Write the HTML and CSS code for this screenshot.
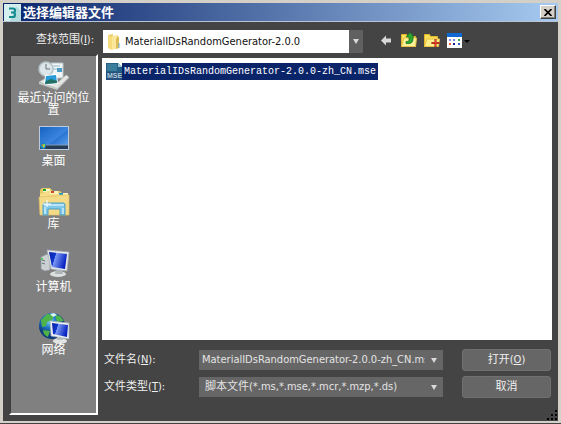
FILE: index.html
```html
<!DOCTYPE html>
<html lang="zh-CN">
<head>
<meta charset="utf-8">
<title>选择编辑器文件</title>
<link rel="stylesheet" href="styles.css">
</head>
<body>
<main class="window">
  <header class="titlebar">
    <svg class="app-icon" width="17" height="17" viewBox="0 0 17 17" aria-hidden="true">
      <rect width="17" height="17" fill="#d5eeee"/>
      <path d="M12 2l5 5v10H6z" fill="#b3dcdf"/>
      <path d="M5 4.500h4q2 0 2 2t-2 2q2 0 2 2.200t-2 2.300H5M7 8.500h2" fill="none" stroke="#168c91" stroke-width="2.200"/>
    </svg>
    <h1 class="title">选择编辑器文件</h1>
    <button class="close" type="button" aria-label="关闭">
      <svg width="8" height="7" viewBox="0 0 8 7"><path d="M.5 0l7 7M7.500 0l-7 7" stroke="#000" stroke-width="1.700"/></svg>
    </button>
  </header>
  <form class="content">
    <label class="look-label" for="folder">查找范围(<u>I</u>):</label>
    <div class="toolbar">
      <div class="folder-box">
        <svg class="folder-icon" width="16" height="18" viewBox="0 0 16 18" aria-hidden="true">
          <path d="M2 2l5-1v15l-5-1z" fill="#e9cf6a"/>
          <path d="M6 3l6-1v13l-6 2z" fill="#fae79a"/>
          <path d="M2 2l4 2v13l-4-2z" fill="#f6dc7c"/>
          <path d="M12 3l1 1v11l-3 1V6z" fill="#dfbd55"/>
          <path d="M13 10v5" stroke="#6caad6"/>
        </svg>
        <select class="folder" id="folder"><option>MaterialIDsRandomGenerator-2.0.0</option></select>
        <span class="folder-arrow"></span>
      </div>
      <div class="tools">
        <button class="tool" type="button" aria-label="后退">
          <svg width="18" height="18" viewBox="0 0 18 18"><path d="M4 9.500l5-5v3h5v4H9v3z" fill="#d8d8d8"/></svg>
        </button>
        <button class="tool" type="button" aria-label="向上一级">
          <svg width="18" height="18" viewBox="0 0 18 18">
            <path d="M1.500 15.500v-12h5l1 2h8v10z" fill="#f9df58" stroke="#e4b72c"/>
            <path d="M1.500 15.500L4 7h12.500l-1 8.500z" fill="#fff29a" stroke="#e8c344"/>
            <path d="M6 12.500q7 1 7-4V6h1L10 1.500 6 6h3v3q0 2-3 1.500z" fill="#2fa52e" stroke="#17731f" stroke-width=".7"/>
          </svg>
        </button>
        <button class="tool" type="button" aria-label="新建文件夹">
          <svg width="18" height="18" viewBox="0 0 18 18">
            <path d="M1.500 15.500v-12h5l1 2h7v10z" fill="#f9df58" stroke="#e4b72c"/>
            <path d="M1.500 15.500L4 8h12.500l-1 7.500z" fill="#fff08b" stroke="#e8c344"/>
            <path d="M12.500 8v8M8.500 12h8" stroke="#8f2a15" stroke-width="2"/>
            <path d="M12.500 8v8M8.500 12h8" stroke="#f03a28"/>
          </svg>
        </button>
        <button class="tool view" type="button" aria-label="查看">
          <svg width="24" height="18" viewBox="0 0 24 18">
            <path d="M1 2h15v15H1z" fill="#fff"/><path d="M1 2h15v4H1z" fill="#1268d2"/>
            <path d="M3 8h2v2H3z" fill="#8c8fd6"/><path d="M7 8h2v2H7z" fill="#6d8be0"/><path d="M12 8h2v2h-2z" fill="#39a641"/>
            <path d="M3 12h2v2H3z" fill="#ee6333"/><path d="M7 12h2v2H7z" fill="#18208f"/><path d="M12 12h2v2h-2z" fill="#3459d0"/>
            <path d="M18 9h6l-3 3z" fill="#000"/>
          </svg>
        </button>
      </div>
    </div>

    <nav class="places">
      <button class="place" type="button">
        <svg width="32" height="32" viewBox="0 0 32 32">
          <path d="M13 3h12v15H13z" fill="#f2f5f5" stroke="#b9c5c7"/><path d="M15 6h7M15 9h7" stroke="#8eb9cc"/>
          <path d="M19 8h5v4h-5z" fill="#4c9cc8"/>
          <circle cx="8" cy="9" r="7" fill="#dce6e9" stroke="#b4c3c8" stroke-width="1.500"/>
          <path d="M8 4v5h4" fill="none" stroke="#61717a"/>
          <path d="M1 22l5-3 12 5 10-9 3 2-12 12z" fill="#e3e6e3" stroke="#adb2ae" stroke-width=".6"/>
          <path d="M7 15l12-1 1 10-14 1z" fill="#fff"/>
          <path d="M8 16l10-1 1 8-12 1z" fill="#269bd7"/><path d="M8 21l5-2 6 2v2l-12 1z" fill="#236f61"/>
          <path d="M1 22v2l18 6 12-12v-1L19 28z" fill="#c4c8c3"/>
        </svg>
        <span class="place-name">最近访问的位置</span>
      </button>
      <button class="place" type="button">
        <svg width="32" height="32" viewBox="0 0 32 32">
          <defs><linearGradient id="desk" x2="1" y2="1"><stop stop-color="#1564c0"/><stop offset=".55" stop-color="#3d85df"/><stop offset=".57" stop-color="#2975d4"/><stop offset="1" stop-color="#69a9ed"/></linearGradient></defs>
          <path d="M1 3h30v24H1z" fill="#b9cbdc"/><path d="M2 4h28v22H2z" fill="url(#desk)"/>
          <path d="M2 22h28v4H2z" fill="#243b55"/><path d="M2 22h28" stroke="#7e9bb8"/>
          <circle cx="5" cy="23" r="3" fill="#1683bd"/><path d="M5 21v2H3z" fill="#f7822d"/><path d="M5 23h2l-2 2z" fill="#f4df37"/><path d="M5 21h2v2H5z" fill="#7fd148"/>
        </svg>
        <span class="place-name">桌面</span>
      </button>
      <button class="place" type="button">
        <svg width="32" height="32" viewBox="0 0 32 32">
          <path d="M2 29V4l2-2h8l3 3h7l2 2h6v22z" fill="#e8c765"/>
          <path d="M5 3h7v3H5z" fill="#fff6c7"/><path d="M5 3h3v2H5z" fill="#18a631"/>
          <path d="M2 8l8-3h8l3 3v20H2z" fill="#f5dd88"/><path d="M12 5h8v3h-8z" fill="#fff2bb"/><path d="M13 5h3v2h-3z" fill="#d14822"/>
          <path d="M20 7h10v3H20z" fill="#fff2bb"/><path d="M21 7h4v2h-4z" fill="#1695d2"/>
          <path d="M1 11l17-1 2-1h11v20H2z" fill="#f3db88" stroke="#dfbf61" stroke-width=".7"/>
          <path d="M5 29V19q0-2 2-2h18q2 0 2 2v10h-5v-6H10v6z" fill="#80c8e8" stroke="#4d9fc5"/>
          <path d="M6 19h20M7 21v7M25 22v6" stroke="#caedf9" stroke-width="1.500"/><path d="M9 14v7M5 18h8" stroke="#fff"/>
        </svg>
        <span class="place-name">库</span>
      </button>
      <button class="place" type="button">
        <svg width="32" height="32" viewBox="0 0 32 32">
          <defs><linearGradient id="screen" x2="1" y2=".3"><stop stop-color="#0a1ea0"/><stop offset=".38" stop-color="#1038d0"/><stop offset=".4" stop-color="#7c9af2"/><stop offset="1" stop-color="#0823c2"/></linearGradient></defs>
          <path d="M3 8l6-3 3 3v13l-5 1-4-2z" fill="#cbd1d3" stroke="#8a9498" stroke-width=".7"/><path d="M4 11l3 1M4 14l3 1" stroke="#66757c"/><circle cx="4" cy="10" r="1" fill="#2fcf38"/>
          <ellipse cx="20" cy="25" rx="8" ry="3" fill="#dde0e0"/><path d="M18 19l6 1 1 5h-8z" fill="#aeb6ba"/>
          <path d="M9 1l22 2-2 19-16-2z" fill="#e3e7eb" stroke="#a5aeb6" stroke-width=".7"/><path d="M11 3l18 2-2 15-13-2z" fill="url(#screen)"/>
        </svg>
        <span class="place-name">计算机</span>
      </button>
      <button class="place" type="button">
        <svg width="32" height="32" viewBox="0 0 32 32">
          <defs><radialGradient id="globe" cx=".4" cy=".3"><stop stop-color="#82d5f5"/><stop offset=".5" stop-color="#237bc8"/><stop offset="1" stop-color="#0d397d"/></radialGradient></defs>
          <circle cx="14" cy="14" r="13" fill="url(#globe)"/>
          <path d="M3 8l6-6 7 1-2 5-5 2-1 4-4 1zM17 3l5 1 4 5-7 1zM5 18l7 1-2 6q-5-2-5-7z" fill="#4eb449"/><path d="M12 2l4-1 3 2-4 2z" fill="#d7f4f4"/>
          <ellipse cx="22" cy="29" rx="7" ry="3" fill="#e2e4e4"/><path d="M19 23h6v5h-6z" fill="#b7bfc3"/>
          <path d="M12 9l19 2v16l-18-3z" fill="#edf0f2" stroke="#a4adb5" stroke-width=".7"/><path d="M14 11l16 2-1 12-14-3z" fill="url(#screen)"/>
        </svg>
        <span class="place-name">网络</span>
      </button>
    </nav>

    <section class="files" aria-label="文件列表">
      <button class="file" type="button">
        <svg width="16" height="17" viewBox="0 0 16 17" aria-hidden="true">
          <path d="M0 0h12l4 4v13H0z" fill="#245f85"/><path d="M1 1h10v7H1z" fill="#397d9b"/><path d="M12 0l4 4h-4z" fill="#a4c6d4"/>
          <path d="M0 9h16v8H0z" fill="#254f7c"/>
          <text class="file-badge" x="1" y="15">MSE</text>
        </svg>
        <span class="file-name">MaterialIDsRandomGenerator-2.0.0-zh_CN.mse</span>
      </button>
    </section>

    <section class="fields">
      <label for="name">文件名(<u>N</u>):</label>
      <div class="combo">
        <input class="name" id="name" value="MaterialIDsRandomGenerator-2.0.0-zh_CN.mse">
        <button class="drop" type="button" aria-label="文件名列表"></button>
      </div>
      <button class="action" type="submit">打开(<u>O</u>)</button>
      <label for="type">文件类型(<u>T</u>):</label>
      <div class="combo">
        <select class="type" id="type"><option>脚本文件(*.ms,*.mse,*.mcr,*.mzp,*.ds)</option></select>
        <span class="drop"></span>
      </div>
      <button class="action" type="button">取消</button>
    </section>
    <svg class="grip" width="12" height="12" viewBox="0 0 12 12" aria-hidden="true"><path d="M9 1h2v2H9zM5 5h2v2H5zM9 5h2v2H9zM1 9h2v2H1zM5 9h2v2H5zM9 9h2v2H9z"/></svg>
  </form>
</main>
</body>
</html>
```
FILE: styles.css
```css
* {
  box-sizing: border-box;
}

body {
  margin: 0;
  background: #444;
  color: #f0f0f0;
  font: 11px/16px "DejaVu Sans Condensed", "Noto Sans CJK SC", sans-serif;
}

button,
input,
select {
  margin: 0;
  padding: 0;
  border: 0;
  border-radius: 0;
  background: none;
  color: inherit;
  font: inherit;
}

select {
  appearance: none;
}

svg {
  display: block;
  flex: none;
}

.window {
  display: flex;
  flex-direction: column;
  min-height: calc(100vh - 1px);
  border: 3px solid #d4d0c8;
  border-bottom-width: 2px;
}

.titlebar {
  display: flex;
  align-items: center;
  gap: 2px;
  height: 19px;
  padding: 0 2px 0 1px;
  border-bottom: 1px solid #b9c4d8;
  background: linear-gradient(90deg, #0a246a, #a6caf0);
}

.title {
  flex: 1;
  margin: 0;
  color: #fff;
  font: bold 13px/18px "Noto Sans CJK SC", sans-serif;
}

.close {
  display: grid;
  place-items: center;
  width: 16px;
  height: 14px;
  border: 1px solid;
  border-color: #fff #404040 #404040 #fff;
  background: #d4d0c8;
  box-shadow: inset -1px -1px #808080;
}

.content {
  position: relative;
  flex: 1;
  display: grid;
  grid-template-columns: 89px 1fr;
  grid-template-rows: 24px 4px 1fr auto;
  column-gap: 4px;
  padding: 8px 6px 6px;
}

.look-label {
  align-self: start;
  padding: 2px 4px 0 0;
  text-align: right;
  white-space: nowrap;
}

.toolbar {
  display: flex;
  align-items: flex-start;
}

.folder-box {
  display: flex;
  align-items: center;
  flex: 0 1 260px;
  position: relative;
  height: 23px;
  margin-left: 1px;
  background: #fff;
}

.folder-icon {
  margin: 0 3px;
}

.folder {
  flex: 1;
  min-width: 0;
  height: 23px;
  color: #111;
}

.folder-arrow {
  display: grid;
  place-items: center;
  width: 14px;
  height: 23px;
  background: #606060;
}

.folder-arrow::before,
.drop::before {
  content: "";
  border: 3px solid transparent;
  border-top: 5px solid #d8d8d8;
  border-bottom: 0;
}

.tools {
  display: flex;
  gap: 5px;
  margin: 1px 0 0 14px;
}

.places {
  grid-column: 1;
  grid-row: 2 / 5;
  display: flex;
  flex-direction: column;
  padding: 4px;
  border: 2px solid;
  border-color: #404040 #fff #fff #404040;
  background: #808080;
}

.place {
  display: flex;
  flex-direction: column;
  align-items: center;
  height: 63px;
  color: #fff;
  font-size: 12px;
  line-height: 12px;
}

.files {
  grid-column: 2;
  grid-row: 3;
  padding: 5px 4px;
  background: #fff;
}

.file {
  display: flex;
  align-items: center;
}

.file-name {
  padding: 0 2px;
  background: #0a246a;
  color: #fff;
  font: 10px/17px "Liberation Mono", monospace;
}

.file-badge {
  fill: #b1cbd9;
  font: bold 7px "Liberation Sans", sans-serif;
}

.fields {
  grid-column: 2;
  grid-row: 4;
  display: grid;
  grid-template-columns: 95px 1fr 89px;
  grid-auto-rows: 22px;
  align-items: center;
  gap: 5px 0;
  padding: 9px 1px 17px 2px;
}

.combo {
  display: flex;
  height: 20px;
  margin-right: 19px;
  background: #666;
  color: #e4e4e4;
}

.name,
.type {
  flex: 1;
  min-width: 0;
  padding-left: 3px;
}

.type {
  padding-left: 6px;
}

.drop {
  display: grid;
  place-items: center;
  width: 18px;
}

.action {
  height: 22px;
  border: 1px solid #707070;
  border-radius: 3px;
  background: #666;
}

.grip {
  position: absolute;
  right: 0;
  bottom: 0;
}
```
